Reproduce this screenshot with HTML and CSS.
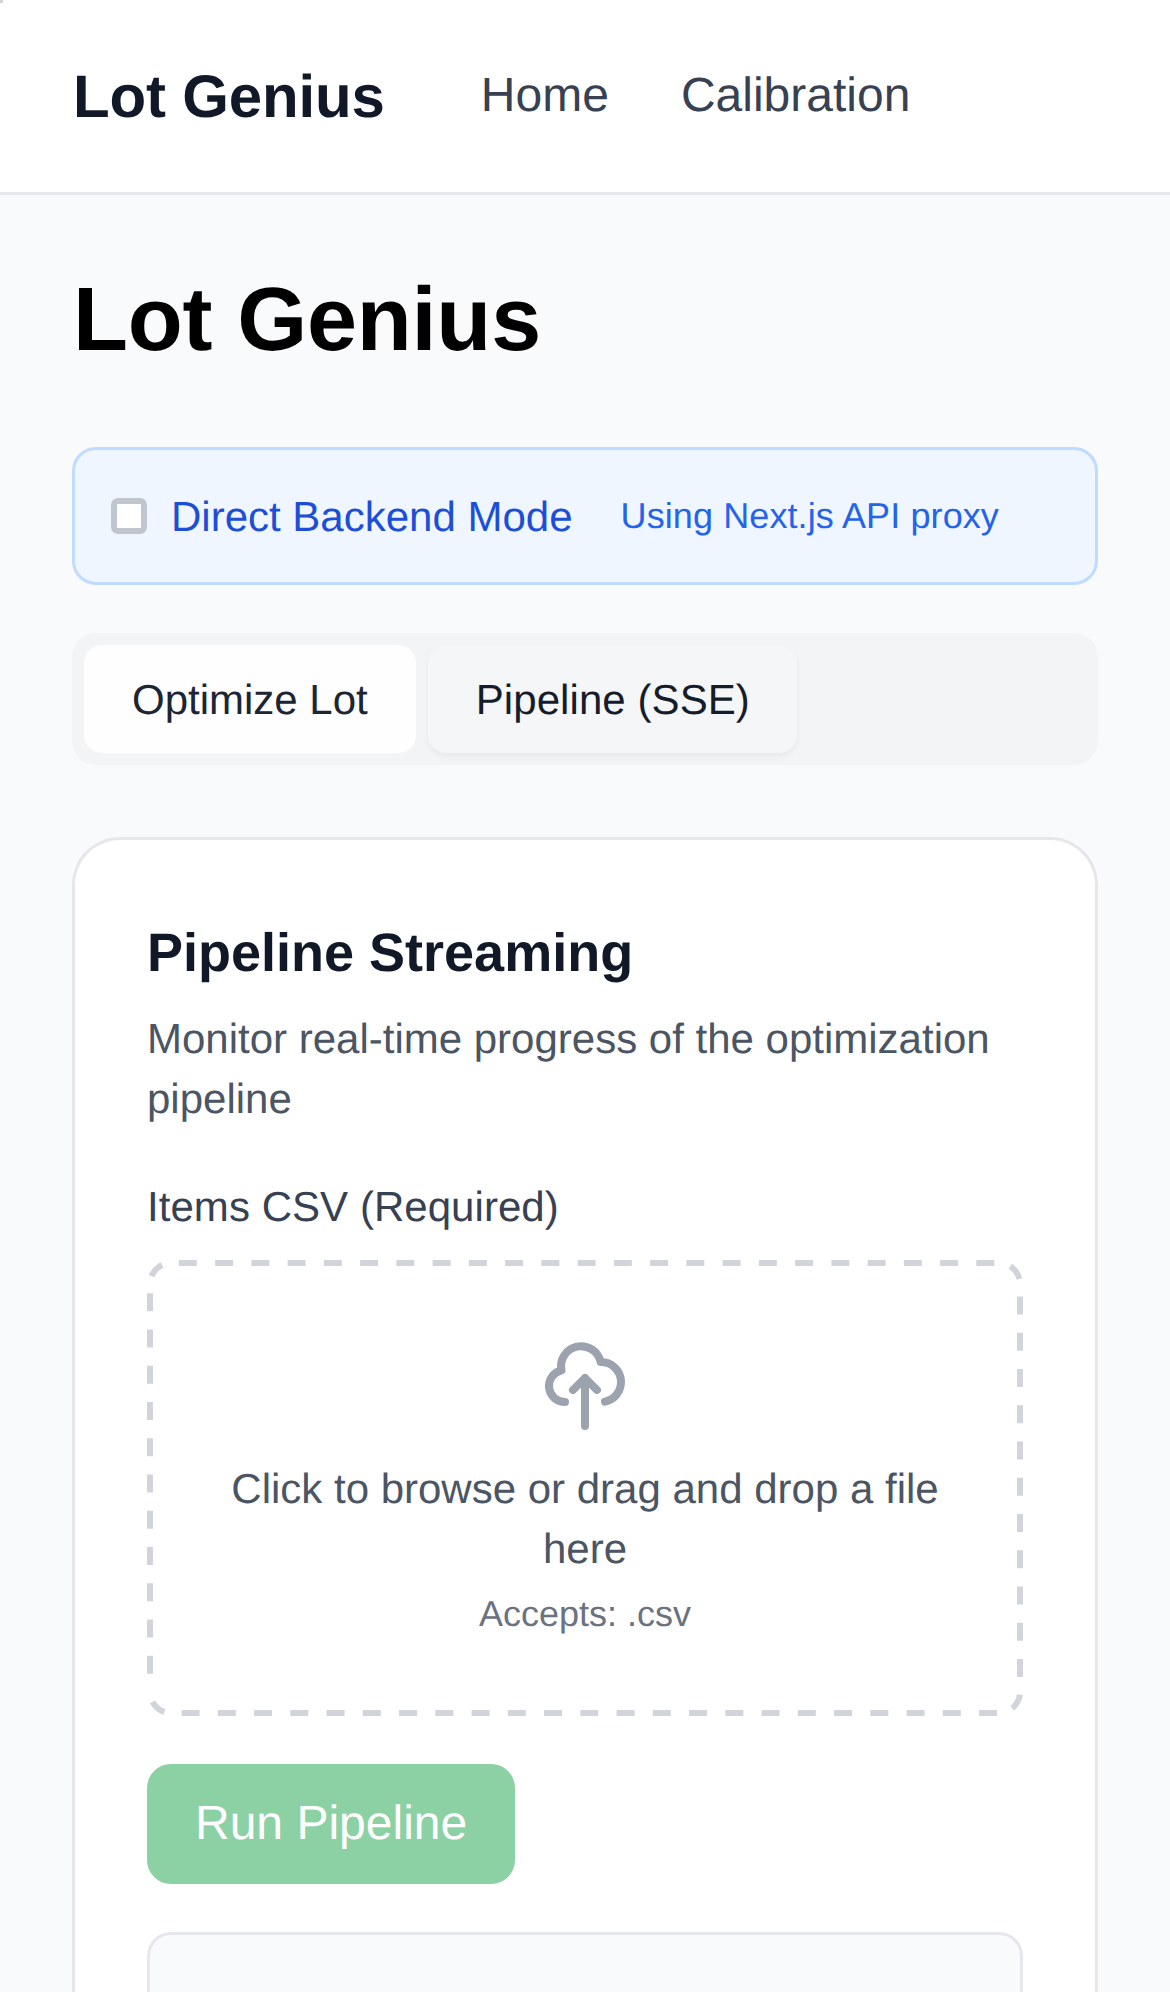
FILE: index.html
```html
<!DOCTYPE html>
<html lang="en">
<head>
<meta charset="utf-8">
<title>Lot Genius</title>
<link rel="stylesheet" href="styles.css">
</head>
<body>
<a class="skip-marker" href="#main" aria-label="Skip to content"></a>
<header class="header">
  <a class="brand" href="#">Lot Genius</a>
  <nav class="nav">
    <a href="#">Home</a>
    <a href="#">Calibration</a>
  </nav>
</header>
<main class="main" id="main">
  <h1 class="page-title">Lot Genius</h1>
  <div class="mode">
    <label class="mode-label"><input class="checkbox" type="checkbox"><span class="mode-name">Direct Backend Mode</span></label>
    <span class="mode-hint">Using Next.js API proxy</span>
  </div>
  <div class="tabs">
    <button class="tab tab-first">Optimize Lot</button>
    <button class="tab tab-second">Pipeline (SSE)</button>
  </div>
  <section class="card">
    <h2 class="card-title">Pipeline Streaming</h2>
    <p class="card-text">Monitor real-time progress of the optimization pipeline</p>
    <div class="field-label">Items CSV (Required)</div>
    <div class="dropzone">
      <svg class="drop-outline" viewBox="0 0 876 456" fill="none" stroke="currentColor" stroke-width="12" stroke-dasharray="18 18.25"><path d="M0 413.7V24A24 24 0 0 1 24 0H852A24 24 0 0 1 876 24V432A24 24 0 0 1 852 456H24A24 24 0 0 1 0 432"/></svg>
      <svg class="upload-icon" viewBox="0 0 24 24" fill="none" stroke="currentColor" stroke-width="2" stroke-linecap="round" stroke-linejoin="round"><path d="M7 16a4 4 0 01-.88-7.903A5 5 0 1115.9 6L16 6a5 5 0 011 9.9M15 13l-3-3m0 0l-3 3m3-3v12"/></svg>
      <p class="drop-text">Click to browse or drag and drop a file here</p>
      <p class="drop-hint">Accepts: .csv</p>
    </div>
    <button class="run">Run Pipeline</button>
    <div class="log"></div>
  </section>
</main>
</body>
</html>
```
FILE: styles.css
```css
* { box-sizing: border-box; margin: 0; }
body {
  background: #f9fafb;
  color: #000;
  font-family: "Liberation Sans", Arial, sans-serif;
  text-rendering: geometricPrecision;
}
a { color: inherit; text-decoration: none; }
button { border: 0; font-family: inherit; text-rendering: inherit; }
.skip-marker { position: absolute; top: 0; left: 0; width: 3px; height: 3px; background: #d4d4d4; }

.header {
  display: flex;
  align-items: center;
  gap: 96px;
  height: 195px;
  padding: 0 72px;
  background: #fff;
  border-bottom: 3px solid #e5e7eb;
}
.brand { padding: 2px 0 0 1px; font-size: 60px; line-height: 84px; font-weight: 700; letter-spacing: -.15px; color: #111827; }
.nav { display: flex; gap: 72px; padding-bottom: 1px; font-size: 48px; line-height: 72px; color: #374151; }

.main { padding: 72px 72px 0; }
.page-title { padding: 0 0 2px 1px; font-size: 90px; line-height: 106px; font-weight: 700; letter-spacing: -.2px; }

.mode {
  display: flex;
  align-items: center;
  gap: 48px;
  height: 138px;
  margin-top: 72px;
  padding: 0 36px;
  background: #eff6ff;
  border: 3px solid #bfdbfe;
  border-radius: 24px;
}
.mode-label { display: flex; align-items: center; gap: 24px; font-size: 42px; line-height: 60px; color: #1d4ed8; }
.mode-name { padding-top: 2px; }
.checkbox {
  appearance: none;
  width: 36px;
  height: 36px;
  background: #fff;
  border: 6px solid #bfc6ce;
  border-radius: 7px;
}
.mode-hint { font-size: 36px; line-height: 48px; letter-spacing: .1px; color: #2563eb; }

.tabs {
  display: flex;
  gap: 12px;
  margin-top: 48px;
  padding: 12px;
  background: #f3f4f6;
  border-radius: 24px;
}
.tab { padding: 25px 48px 23px; font-size: 42px; line-height: 60px; border-radius: 18px; }
.tab-first { background: #fefefe; color: #1c2534; }
.tab-second { padding-right: 47px; background: #f5f6f8; color: #151d2c; letter-spacing: .07px; box-shadow: 0 3px 6px rgba(0, 0, 0, .05); }

/* The card and its log panel continue below the fold */
.card {
  height: 1155px;
  margin-top: 72px;
  padding: 72px 72px 0;
  background: #fff;
  border: 3px solid #e5e7eb;
  border-bottom: 0;
  border-radius: 48px 48px 0 0;
}
.card-title { font-size: 54px; line-height: 82px; padding-bottom: 2px; font-weight: 700; color: #111827; }
.card-text { margin-top: 13px; font-size: 42px; line-height: 60px; color: #4b5563; }
.field-label { margin-top: 48px; font-size: 42px; line-height: 60px; letter-spacing: .05px; color: #374151; }
.dropzone {
  position: relative;
  display: flex;
  flex-direction: column;
  align-items: center;
  margin-top: 23px;
  padding: 78px;
  border-radius: 24px;
  text-align: center;
}
.drop-outline { position: absolute; inset: 0; width: 876px; height: 456px; overflow: hidden; border-radius: 24px; color: #d1d5db; }
.upload-icon { width: 96px; height: 96px; color: #9ca3af; }
.drop-text { margin-top: 25px; font-size: 42px; line-height: 60px; color: #4b5563; }
.drop-hint { margin-top: 11px; font-size: 36px; line-height: 48px; color: #6b7280; }
.run {
  display: block;
  margin-top: 48px;
  padding: 24px 48px;
  background: #8bd1a4;
  border-radius: 24px;
  color: #fff;
  font-size: 48px;
  line-height: 72px;
}
.log { height: 60px; margin-top: 48px; background: #f9fafb; border: 3px solid #e5e7eb; border-bottom: 0; border-radius: 24px 24px 0 0; }
```
